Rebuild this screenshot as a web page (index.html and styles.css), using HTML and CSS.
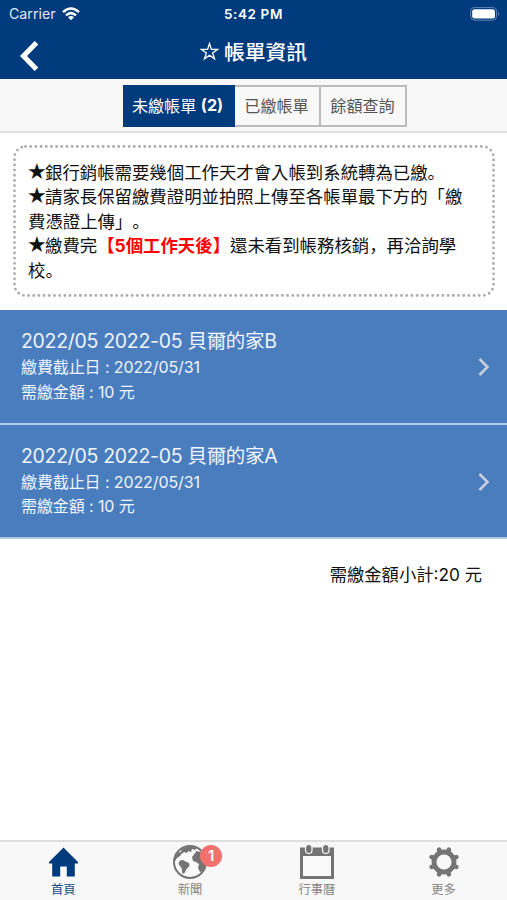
FILE: index.html
```html
<!DOCTYPE html>
<html lang="zh-Hant">
<head>
<meta charset="utf-8">
<title>帳單資訊</title>
<link rel="stylesheet" href="styles.css">
</head>
<body>
<div class="app">
  <header class="header">
    <div class="status">
      <div class="carrier"><span>Carrier</span>
        <svg width="18" height="14" viewBox="0 0 18 14" fill="none" stroke="#fff" stroke-width="2.5"><path d="M1 5.2Q9-2.2 17 5.2M4 8.4Q9 3.900 14 8.4"/><path d="M9 13.3 6 10.2Q9 7.800 12 10.2Z" fill="#fff" stroke="none"/></svg>
      </div>
      <div class="time">5:42 PM</div>
      <svg class="battery" width="30" height="14" viewBox="0 0 30 14"><rect x=".6" y=".6" width="26" height="12.6" rx="4" fill="none" stroke="#6686b3"/><rect x="2.2" y="2.2" width="22.8" height="9.4" rx="2.4" fill="#fff"/><path d="M28 4.8Q30 7 28 9.2Z" fill="#6686b3"/></svg>
    </div>
    <div class="navbar">
      <svg class="back" width="20" height="30" viewBox="0 0 20 30" fill="none" stroke="#fff" stroke-width="5"><path d="M16.500 1.700 3.500 15 16.500 28.300"/></svg>
      <h1 class="title"><svg width="19" height="19" viewBox="0 0 19 19" fill="none" stroke="#fff" stroke-width="1.3"><path d="m9.5 1.500 1.900 5.900h6.200l-5 3.600 1.900 5.900-5-3.600-5 3.600 1.900-5.900-5-3.600h6.200Z"/></svg><span>帳單資訊</span></h1>
    </div>
  </header>
  <nav class="tabs">
    <div class="tab active">未繳帳單 <b>(2)</b></div>
    <div class="tab">已繳帳單</div>
    <div class="tab">餘額查詢</div>
  </nav>
  <main class="content">
    <div class="notice">
      <svg class="outline" width="482" height="152"><rect x="1.500" y="1.500" width="479" height="149" rx="11"/></svg>
      <p><span class="star">★</span>銀行銷帳需要幾個工作天才會入帳到系統轉為已繳<span lang="zh-Hans" class="punct">。</span></p>
      <p><span class="star">★</span>請家長保留繳費證明並拍照上傳至各帳單最下方的「繳<br>費憑證上傳」<span lang="zh-Hans" class="punct">。</span></p>
      <p><span class="star">★</span>繳費完<strong>【5個工作天後】</strong>還未看到帳務核銷<span lang="zh-Hans" class="punct">，</span>再洽詢學<br>校<span lang="zh-Hans" class="punct">。</span></p>
    </div>
    <div class="bills">
      <div class="bill">
        <div><h2>2022/05 2022-05 貝爾的家B</h2><p>繳費截止日 : 2022/05/31</p><p>需繳金額 : 10 元</p></div>
        <svg width="12" height="18" viewBox="0 0 12 18" fill="none" stroke="#c9cfdf" stroke-width="2.5"><path d="m1.500 1 8 8-8 8"/></svg>
      </div>
      <div class="bill">
        <div><h2>2022/05 2022-05 貝爾的家A</h2><p>繳費截止日 : 2022/05/31</p><p>需繳金額 : 10 元</p></div>
        <svg width="12" height="18" viewBox="0 0 12 18" fill="none" stroke="#c9cfdf" stroke-width="2.5"><path d="m1.500 1 8 8-8 8"/></svg>
      </div>
    </div>
    <p class="total">需繳金額小計:20 元</p>
  </main>
  <footer class="footer">
    <div class="item current">
      <svg width="36" height="36" viewBox="0 0 36 36"><path d="M18.500 3.500 4 18V19.500H7.200V32.500h8V22.500h6.600v10h8V19.500h3.200V18Z" fill="#003b7e"/></svg>
      <span>首頁</span>
    </div>
    <div class="item">
      <div class="icon-wrap">
        <svg width="36" height="36" viewBox="0 0 36 36"><circle cx="18" cy="18" r="16" fill="#fafafa" stroke="#747474" stroke-width="2"/><g fill="#747474"><path d="M10 5Q16 1 25 4l-2 2-3-1-1 3-3-1-1 2-3-1-1 1-3 1Z"/><path d="M3 12 7 8l3 1-2 3-3 2-2 3ZM7.500 17q3-2 5 0l4.500 2 .5 3-3 3-2 4-2 1-1-6-3-4Z"/><path d="m24 7 5 1 4 6 1 6-3 7-3 1-2-4 1-4-3-2-3-1-1-4 4-5Z"/></g></svg>
        <span class="badge">1</span>
      </div>
      <span>新聞</span>
    </div>
    <div class="item">
      <svg width="36" height="36" viewBox="0 0 36 36"><path d="M1 3.500h34V35H1Z" fill="#747474"/><path d="M4 12h28v20H4Z" fill="#fafafa"/><g fill="#747474" stroke="#fafafa" stroke-width="1.200"><rect x="6.500" y=".5" width="6.500" height="9" rx="3.200"/><rect x="23.500" y=".5" width="6.500" height="9" rx="3.200"/></g></svg>
      <span>行事曆</span>
    </div>
    <div class="item">
      <svg width="36" height="36" viewBox="-18 -18 36 36"><circle r="10" fill="none" stroke="#747474" stroke-width="4.800"/><g stroke="#747474" stroke-width="4.600" stroke-linecap="round"><path d="M-4.500-10.900-4.900-12.400M4.500-10.900 4.900-12.400M10.900-4.500 12.400-4.900M10.900 4.500 12.400 4.900M4.500 10.900 4.900 12.400M-4.500 10.900-4.900 12.400M-10.900 4.500-12.400 4.900M-10.900-4.500-12.400-4.900"/></g></svg>
      <span>更多</span>
    </div>
  </footer>
</div>
</body>
</html>
```

FILE: styles.css
```css
* { box-sizing: border-box; margin: 0; padding: 0; }
body { font-family: Inter, "Noto Sans CJK TC", sans-serif; background: #fff; color: #111; text-spacing-trim: space-all; }
svg { display: block; flex: none; }
.app { height: 900px; display: flex; flex-direction: column; overflow: hidden; }
.header { height: 79px; background: #003b7e; color: #fff; flex: none; }
.status { height: 27px; display: grid; grid-template-columns: 1fr auto 1fr; align-items: center; padding: 0 7px 0 9px; }
.carrier { display: flex; align-items: center; gap: 6px; color: #e1e8f1; font-size: 14.2px; }
.time { font-weight: 600; font-size: 13.5px; letter-spacing: .6px; margin-left: -2px; }
.battery { justify-self: end; }
.navbar { height: 52px; display: grid; grid-template-columns: 60px 1fr 60px; align-items: center; }
.back { margin: 5px 0 0 20px; }
.title { display: flex; justify-content: center; align-items: center; gap: 5px; font-size: 20.8px; line-height: 30px; font-weight: 500; }
.title svg { margin-top: -3px; }
.tabs { height: 54px; flex: none; background: #f8f8f8; border-bottom: 2px solid #dedede; display: flex; justify-content: center; padding: 6px 0 5px 22px; }
.tab { width: 86px; height: 42px; border: 2px solid #bcbcbc; border-left-width: 0; display: flex; align-items: center; justify-content: center; font-size: 16.1px; color: #555; white-space: pre; padding-bottom: 3px; }
.tab.active { width: 112px; background: #003b7e; color: #fff; border-color: #003b7e; }
.content { flex: 1; min-height: 0; }
.notice { position: relative; margin: 12px 12px 13px 13px; height: 152px; padding: 16px 15px; font-size: 17.4px; line-height: 24.4px; white-space: nowrap; }
.outline { position: absolute; inset: 0; fill: none; stroke: #aaa; stroke-width: 2.8px; stroke-linecap: round; stroke-dasharray: 0 5.18; }
.star { display: inline-block; width: 17px; height: 20px; font-family: "DejaVu Sans", sans-serif; font-size: 22px; line-height: 20px; vertical-align: baseline; margin: -2px 0; text-indent: -1px; }
.notice strong { color: #f00; font-weight: 700; }
.punct { font-family: "Noto Sans CJK SC", sans-serif; line-height: 1; }
.bill { height: 114.5px; background: #4a7dbd; color: #f0f5ff; border-bottom: 2px solid #b5c9e4; padding: 18px 17px 0 21px; display: flex; justify-content: space-between; }
.bill h2 { font-size: 19.5px; font-weight: 400; line-height: 27px; letter-spacing: -.3px; }
.bill p { font-size: 16px; line-height: 24.5px; letter-spacing: -.1px; }
.bill svg { margin-top: 30px; }
.total { text-align: right; padding: 23px 25px 0 0; font-size: 17.3px; line-height: 26px; }
.footer { height: 60px; flex: none; background: #f8f8f8; border-top: 2px solid #dedede; display: grid; grid-template-columns: repeat(4, 1fr); }
.item { display: flex; flex-direction: column; align-items: center; padding-top: 2px; color: #858585; font-size: 12.3px; line-height: 19px; }
.current { color: #174b88; }
.icon-wrap { position: relative; }
.badge { position: absolute; left: 28px; top: 1px; width: 22px; height: 22px; border-radius: 50%; background: #f2706e; color: #fff; text-align: center; line-height: 22px; font-size: 15px; font-weight: 600; }
```
